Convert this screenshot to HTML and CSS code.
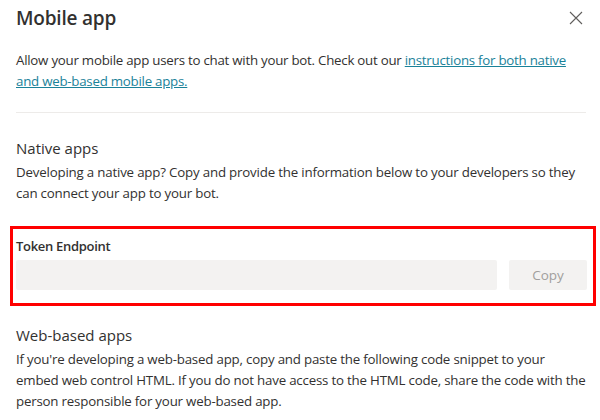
FILE: index.html
```html
<!DOCTYPE html>
<html>
<head>
<meta charset="utf-8">
<link rel="stylesheet" href="styles.css">
</head>
<body>
<div class="panel">
  <header class="head">
    <h1 class="title">Mobile app</h1>
    <button class="close" aria-label="Close">
      <svg width="14" height="14" viewBox="0 0 14 14"><path d="M1 1 L13 13 M13 1 L1 13" stroke="#605e5c" stroke-width="1.1" fill="none"/></svg>
    </button>
  </header>
  <p class="intro">Allow your mobile app users to chat with your bot. Check out our <a href="#" class="link">instructions for both native and web-based mobile apps.</a></p>
  <hr class="divider">
  <section class="section">
    <h2 class="sub">Native apps</h2>
    <p class="text">Developing a native app? Copy and provide the information below to your developers so they can connect your app to your bot.</p>
  </section>
  <div class="highlight">
    <div class="label">Token Endpoint</div>
    <div class="field-row">
      <div class="field"></div>
      <button class="copy">Copy</button>
    </div>
  </div>
  <section class="section web">
    <h2 class="sub">Web-based apps</h2>
    <p class="text">If you're developing a web-based app, copy and paste the following code snippet to your embed web control HTML. If you do not have access to the HTML code, share the code with the person responsible for your web-based app.</p>
  </section>
</div>
</body>
</html>
```
FILE: styles.css
```css
* { box-sizing: border-box; }
html, body { margin: 0; background: #fff; }
body { font-family: "Open Sans", "Noto Sans", sans-serif; color: #323130; width: 600px; height: 420px; overflow: hidden; }
.panel { padding: 0 14px 0 16px; }
.head { display: flex; justify-content: space-between; align-items: center; height: 36px; }
.title { margin: 0; font-size: 19px; font-weight: 600; letter-spacing: -0.2px; color: #323130; }
.close { border: 0; background: none; padding: 0; width: 16px; height: 16px; display: flex; align-items: center; justify-content: center; margin-right: 2px; }
.intro { margin: 14px 0 0; font-size: 13.3px; line-height: 21px; letter-spacing: -0.25px; color: #323130; }
.link { color: #1a8299; text-decoration: underline; }
.divider { border: 0; border-top: 1px solid #edebe9; margin: 20px 0 0; width: 570px; }
.section { margin-top: 24px; }
.sub { margin: 0; font-size: 15px; font-weight: 400; line-height: 22px; color: #323130; }
.text { margin: 3px 0 0; font-size: 13.3px; line-height: 21px; letter-spacing: -0.19px; color: #323130; }
.highlight { margin: 22px 0 0 -6px; width: 586px; border: 3px solid #ff0000; padding: 7px 6px 13px 3px; }
.label { font-size: 13px; font-weight: 600; line-height: 20px; letter-spacing: -0.3px; color: #323130; }
.field-row { display: flex; gap: 12px; margin-top: 4px; }
.field { flex: 0 0 481px; height: 30px; background: #f3f2f1; border-radius: 2px; }
.copy { width: 78px; height: 30px; border: 0; border-radius: 2px; background: #f3f2f1; color: #a19f9d; font-family: inherit; font-size: 13.5px; }
.web { margin-top: 18px; }
.web .text { letter-spacing: -0.2px; }
```
